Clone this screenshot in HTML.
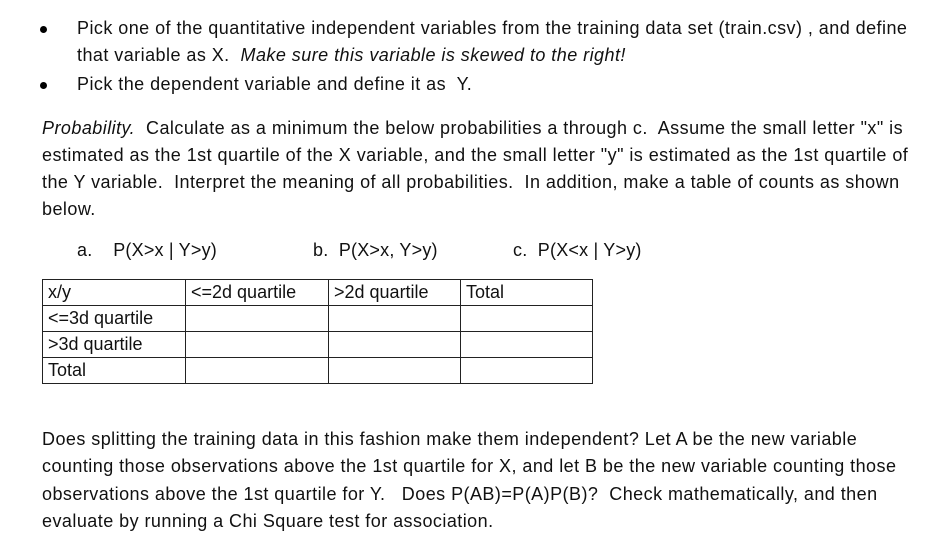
<!DOCTYPE html>
<html><head><meta charset="utf-8"><style>
body{margin:0;background:#fff;width:936px;height:537px;position:relative;overflow:hidden;font-family:"Liberation Sans",sans-serif;font-size:18px;letter-spacing:0.45px;color:#111}
.l{position:absolute;white-space:nowrap;line-height:20px}
.b{position:absolute;width:7px;height:7px;border-radius:50%;background:#000}
table{position:absolute;left:42px;top:279px;border-collapse:collapse}
td{border:1px solid #222;height:26px;padding:2px 0 0 5px;font-size:18px;line-height:20px;vertical-align:top;box-sizing:border-box;letter-spacing:0}
</style></head><body>
<div class="b" style="left:40px;top:26px"></div>
<div class="l" style="left:77px;top:18px">Pick one of the quantitative independent variables from the training data set (train.csv) , and define</div>
<div class="l" style="left:77px;top:45px">that variable as X.&nbsp; <i>Make sure this variable is skewed to the right!</i></div>
<div class="b" style="left:40px;top:82px"></div>
<div class="l" style="left:77px;top:74px">Pick the dependent variable and define it as&nbsp; Y.</div>
<div class="l" style="left:42px;top:118px"><i>Probability.</i>&nbsp; Calculate as a minimum the below probabilities a through c.&nbsp; Assume the small letter "x" is</div>
<div class="l" style="left:42px;top:145px">estimated as the 1st quartile of the X variable, and the small letter "y" is estimated as the 1st quartile of</div>
<div class="l" style="left:42px;top:172px">the Y variable.&nbsp; Interpret the meaning of all probabilities.&nbsp; In addition, make a table of counts as shown</div>
<div class="l" style="left:42px;top:199px">below.</div>
<div class="l" style="left:77px;top:240px;letter-spacing:0.2px">a.&nbsp;&nbsp;&nbsp; P(X&gt;x | Y&gt;y)</div>
<div class="l" style="left:313px;top:240px;letter-spacing:0.2px">b.&nbsp; P(X&gt;x, Y&gt;y)</div>
<div class="l" style="left:513px;top:240px;letter-spacing:0.2px">c.&nbsp; P(X&lt;x | Y&gt;y)</div>
<table>
<tr><td style="width:143px">x/y</td><td style="width:143px">&lt;=2d quartile</td><td style="width:132px">&gt;2d quartile</td><td style="width:132px">Total</td></tr>
<tr><td>&lt;=3d quartile</td><td></td><td></td><td></td></tr>
<tr><td>&gt;3d quartile</td><td></td><td></td><td></td></tr>
<tr><td>Total</td><td></td><td></td><td></td></tr>
</table>
<div class="l" style="left:42px;top:429px">Does splitting the training data in this fashion make them independent? Let A be the new variable</div>
<div class="l" style="left:42px;top:456px">counting those observations above the 1st quartile for X, and let B be the new variable counting those</div>
<div class="l" style="left:42px;top:484px">observations above the 1st quartile for Y.&nbsp;&nbsp; Does P(AB)=P(A)P(B)?&nbsp; Check mathematically, and then</div>
<div class="l" style="left:42px;top:511px">evaluate by running a Chi Square test for association.</div>
</body></html>
